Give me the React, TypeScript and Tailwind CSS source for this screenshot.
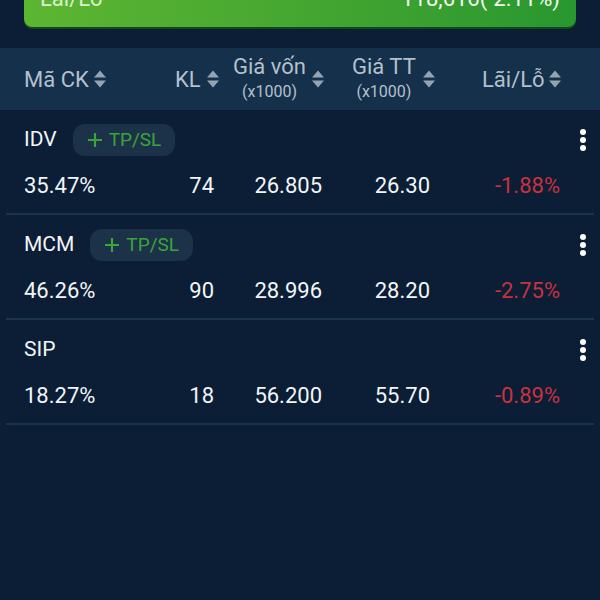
import React from "react";

type Holding = {
	code: string;
	tpsl: boolean;
	ratio: string;
	qty: string;
	cost: string;
	price: string;
	pl: string;
};

const holdings: Holding[] = [
	{ code: "IDV", tpsl: true, ratio: "35.47%", qty: "74", cost: "26.805", price: "26.30", pl: "-1.88%" },
	{ code: "MCM", tpsl: true, ratio: "46.26%", qty: "90", cost: "28.996", price: "28.20", pl: "-2.75%" },
	{ code: "SIP", tpsl: false, ratio: "18.27%", qty: "18", cost: "56.200", price: "55.70", pl: "-0.89%" },
];

const SortIcon = () => (
	<svg width="14" height="20" viewBox="0 0 14 20" className="shrink-0">
		<path d="M7 1.5 L13 8.5 H1 Z" fill="#97a3b0" />
		<path d="M1 11.5 H13 L7 18.5 Z" fill="#97a3b0" />
	</svg>
);

const Kebab = () => (
	<div className="flex flex-col items-center gap-[2px] w-[6px]">
		<span className="w-[6px] h-[6px] rounded-full bg-white" />
		<span className="w-[6px] h-[6px] rounded-full bg-white" />
		<span className="w-[6px] h-[6px] rounded-full bg-white" />
	</div>
);

const HoldingRow = ({ item }: { item: Holding }) => (
	<div className="mx-[6px] border-b-2 border-[#1a334e]">
		<div className="pl-[18px] pr-[8px] pt-[14px] pb-[15px]">
			<div className="flex items-center h-[32px]">
				<span className="text-[21px] text-[#f2f5f8]">{item.code}</span>
				{item.tpsl && (
					<div className="ml-4 h-[32px] px-[14px] rounded-xl bg-[#1b3249] flex items-center gap-[6px] text-[#3ba33b]">
						<svg width="16" height="16" viewBox="0 0 16 16">
							<path d="M8 1 V15 M1 8 H15" stroke="#3ba33b" strokeWidth="2.2" />
						</svg>
						<span className="text-[19px]">TP/SL</span>
					</div>
				)}
				<div className="ml-auto">
					<Kebab />
				</div>
			</div>
			<div className="grid grid-cols-[126px_64px_114px_106px_124px] mt-[18px] text-[22px] leading-[24px] text-[#f2f5f8]">
				<span>{item.ratio}</span>
				<span className="text-right">{item.qty}</span>
				<span className="text-right pr-[6px]">{item.cost}</span>
				<span className="text-right pr-[4px]">{item.price}</span>
				<span className="text-right pr-[-2px] mr-[-2px] text-[#c8313f]">{item.pl}</span>
			</div>
		</div>
	</div>
);

export default function App() {
	return (
		<div
			className="w-[600px] h-[600px] overflow-hidden bg-[#0b1e35]"
			style={{ fontFamily: "Roboto, 'Liberation Sans', sans-serif" }}
		>
			<div className="mx-6 mt-[-31px] h-[58px] rounded-lg bg-gradient-to-r from-[#5db632] to-[#28972f] shadow-[0_2px_0_#0f4a1e] flex items-center justify-between px-4 text-[22px]">
				<span className="text-[#d9f0cc]">Lãi/Lỗ</span>
				<span className="text-[#f4fbef]">118,616(-2.11%)</span>
			</div>

			<div className="mt-[21px] h-[62px] bg-[#15304a] flex items-center pl-6 text-[#b4c0cc]">
				<div className="w-[151px] flex items-center gap-[4px]">
					<span className="text-[22px]">Mã CK</span>
					<SortIcon />
				</div>
				<div className="w-[58px] flex items-center gap-[5px]">
					<span className="text-[22px]">KL</span>
					<SortIcon />
				</div>
				<div className="w-[119px] flex items-center gap-[5px]">
					<div className="flex flex-col items-center">
						<span className="text-[22px] leading-[26px]">Giá vốn</span>
						<span className="text-[16px] leading-[24px]">(x1000)</span>
					</div>
					<SortIcon />
				</div>
				<div className="w-[130px] flex items-center gap-[6px]">
					<div className="flex flex-col items-center">
						<span className="text-[22px] leading-[26px]">Giá TT</span>
						<span className="text-[16px] leading-[24px]">(x1000)</span>
					</div>
					<SortIcon />
				</div>
				<div className="flex items-center gap-[3px]">
					<span className="text-[22px]">Lãi/Lỗ</span>
					<SortIcon />
				</div>
			</div>

			<div>
				{holdings.map((h) => (
					<HoldingRow key={h.code} item={h} />
				))}
			</div>
		</div>
	);
}
